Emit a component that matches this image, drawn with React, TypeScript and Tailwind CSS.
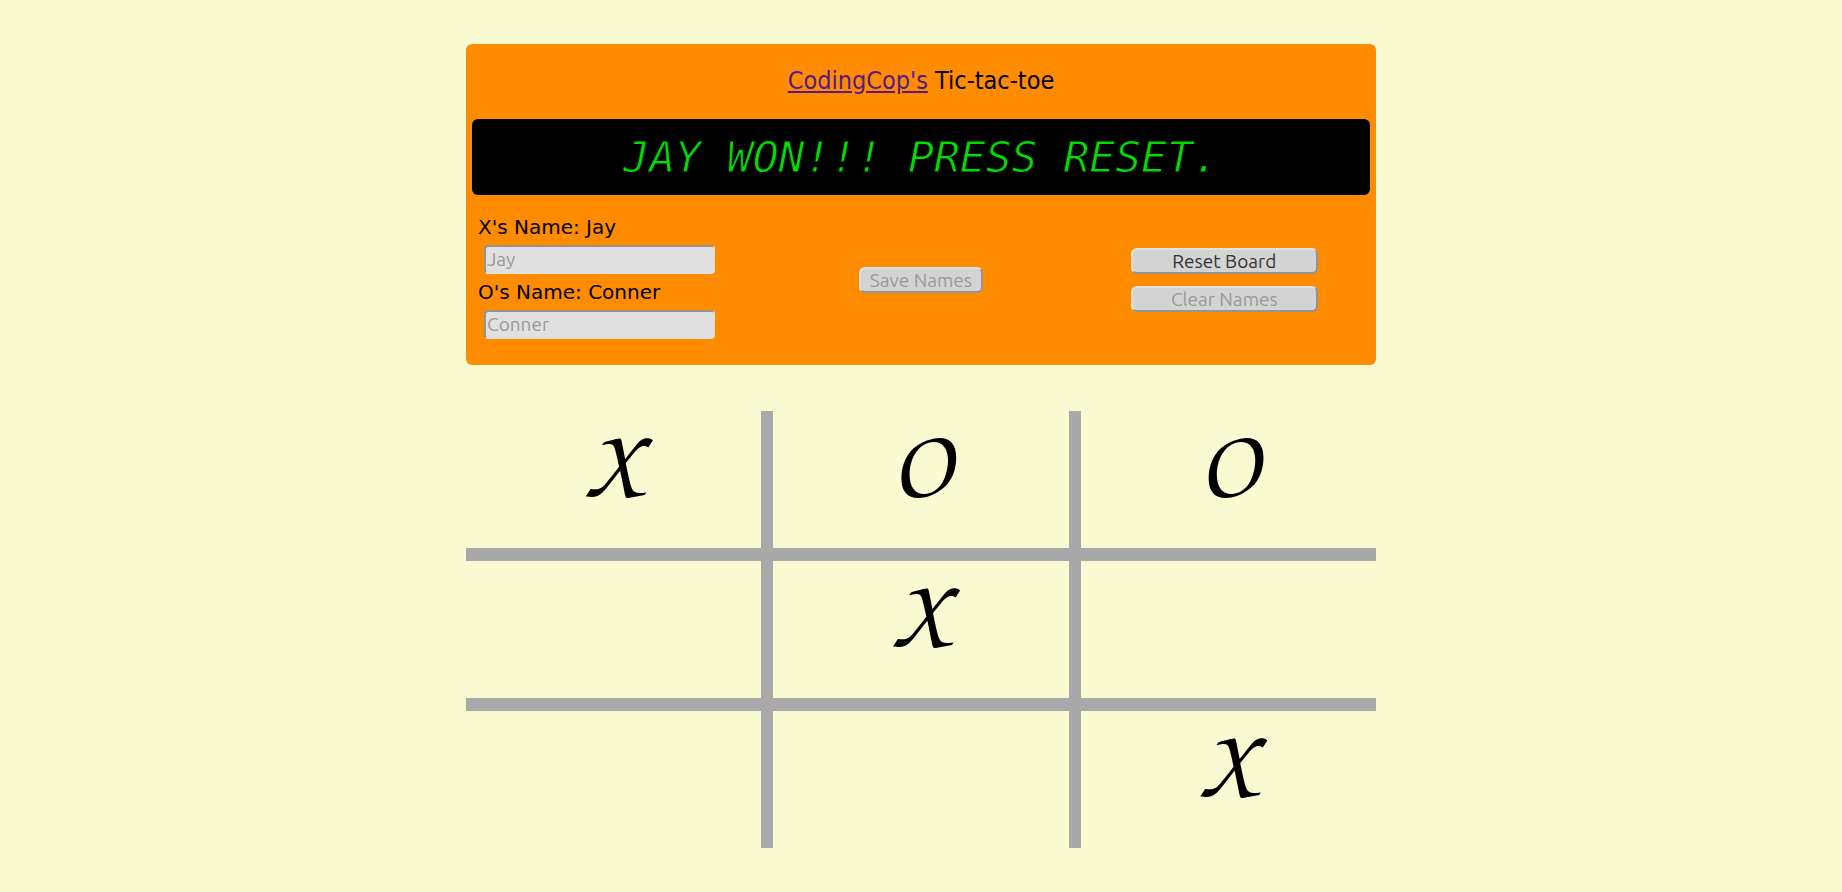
import { useState } from "react";

type Mark = "X" | "O" | "";

const cells: Mark[] = ["X", "O", "O", "", "X", "", "", "", "X"];

const buttonStyle =
  "h-[26px] rounded-[6px] border-2 border-t-[#e0e0e0] border-l-[#e0e0e0] border-r-[#949494] border-b-[#949494] bg-[#d3d3d3] font-['Ubuntu','Noto_Sans',sans-serif] text-[19px] leading-[22px] text-[#333333] disabled:text-[#999999]";

function NameField({ id, mark, name }: { id: string; mark: string; name: string }) {
  return (
    <div>
      <label htmlFor={id} className="block h-8 pl-3 text-[20px] leading-8">
        {mark}'s Name: {name}
      </label>
      <input
        id={id}
        type="text"
        disabled
        placeholder={name}
        className="my-0.5 ml-[18px] block h-[29px] w-[231px] max-w-[90%] rounded-[4px] border-2 border-t-[#949494] border-l-[#949494] border-r-[#e0e0e0] border-b-[#e0e0e0] bg-[#e0e0e0] px-px pb-0.5 font-['Ubuntu','Noto_Sans',sans-serif] text-[19px] placeholder:text-[#999999]"
      />
    </div>
  );
}

export default function App() {
  const [board] = useState<Mark[]>(cells);

  return (
    <div className="min-h-screen bg-[#fafad2] pt-11 pb-11 font-['DejaVu_Sans',sans-serif] text-black">
      <main className="mx-auto w-full max-w-[910px]">
        <section className="rounded-[6px] bg-[#ff8c00] pb-6">
          <h1 className="pt-5 pb-[22px] text-center font-['DejaVu_Sans_Condensed','DejaVu_Sans',sans-serif] text-[25px] leading-[33px]">
            <a href="#codingcop" className="text-[#551a8b] underline">
              CodingCop's
            </a>{" "}
            Tic-tac-toe
          </h1>
          <p
            role="status"
            className="mx-1.5 rounded-[6px] bg-black py-[14px] text-center font-['DejaVu_Sans_Mono',monospace] text-[43px] leading-12 text-[#00e000] italic [-webkit-text-stroke:1px_black]"
          >
            JAY WON!!! PRESS RESET.
          </p>
          <div className="mt-4 grid grid-cols-3 items-center">
            <div>
              <NameField id="x-name" mark="X" name="Jay" />
              <NameField id="o-name" mark="O" name="Conner" />
            </div>
            <div className="flex justify-center pt-2">
              <button type="button" disabled className={`${buttonStyle} w-[124px]`}>
                Save Names
              </button>
            </div>
            <div className="flex flex-col items-center gap-3 pt-2">
              <button type="button" className={`${buttonStyle} w-[187px]`}>
                Reset Board
              </button>
              <button type="button" disabled className={`${buttonStyle} w-[187px]`}>
                Clear Names
              </button>
            </div>
          </div>
        </section>

        <section aria-label="Board" className="mt-[46px] bg-[#a9a9a9]">
          <div className="grid grid-cols-3 gap-x-3 gap-y-[13px]">
            {board.map((mark, i) => (
              <div
                key={i}
                className="h-[137px] bg-[#fafad2] text-center font-['TeX_Gyre_Chorus','Liberation_Serif',serif] text-[100px] leading-[98px]"
              >
                {mark}
              </div>
            ))}
          </div>
        </section>
      </main>
    </div>
  );
}
